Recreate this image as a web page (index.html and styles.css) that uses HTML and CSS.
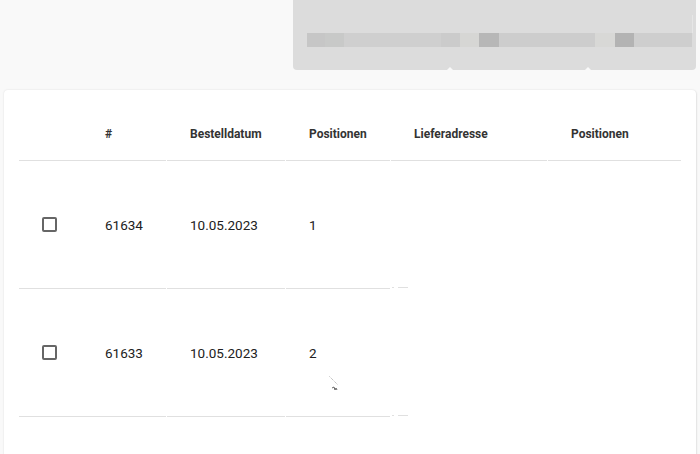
FILE: index.html
```html
<!DOCTYPE html>
<html lang="de">
<head>
<meta charset="utf-8">
<title>Bestellungen</title>
<link rel="stylesheet" href="styles.css">
</head>
<body>
<div class="top">
  <div class="panel">
    <div class="bar">
      <span class="b b1"></span><span class="b b2"></span><span class="b b3"></span><span class="b b4"></span><span class="b b5"></span><span class="b b6"></span><span class="b b7"></span><span class="b b8"></span><span class="b b9"></span><span class="b b10"></span>
    </div>
    <span class="vline"></span>
    <span class="notch n1"></span>
    <span class="notch n2"></span>
  </div>
</div>
<div class="card">
  <div class="grid">
    <div class="th cb-col"></div>
    <div class="th">#</div>
    <div class="th">Bestelldatum</div>
    <div class="th">Positionen</div>
    <div class="th">Lieferadresse</div>
    <div class="th">Positionen</div>

    <div class="td cb-col"><span class="checkbox"></span></div>
    <div class="td">61634</div>
    <div class="td">10.05.2023</div>
    <div class="td">1</div>
    <div class="td addr"><span class="seg s1"></span><span class="seg s2"></span></div>
    <div class="td empty"></div>

    <div class="td cb-col"><span class="checkbox"></span></div>
    <div class="td">61633</div>
    <div class="td">10.05.2023</div>
    <div class="td">2</div>
    <div class="td addr"><span class="seg s1"></span><span class="seg s2"></span></div>
    <div class="td empty"></div>

    <div class="td cb-col"></div>
    <div class="td"></div>
    <div class="td"></div>
    <div class="td"></div>
    <div class="td empty"></div>
    <div class="td empty"></div>
  </div>
  <svg class="cursor" width="12" height="16" viewBox="0 0 12 16">
    <line x1="0.5" y1="0.5" x2="9" y2="9" stroke="#aaa" stroke-width="1" stroke-dasharray="1 1"/>
    <path d="M3 12 L5 11 L6 14 L7 12 L8 14" fill="none" stroke="#666" stroke-width="1"/>
  </svg>
</div>
</body>
</html>
```
FILE: styles.css
```css
html, body {
  margin: 0;
  padding: 0;
  background: #f9f9f9;
  font-family: Roboto, "Liberation Sans", Arial, sans-serif;
  overflow: hidden;
  height: 454px;
}
.top {
  display: flex;
  justify-content: flex-end;
  padding-right: 4px;
  height: 90px;
}
.panel {
  position: relative;
  width: 403px;
  height: 70px;
  background: #dcdcdc;
  border-radius: 0 0 4px 4px;
  display: flex;
  align-items: flex-start;
}
.bar {
  display: flex;
  margin: 33px 0 0 14px;
  height: 14px;
}
.b { display: block; height: 14px; }
.b1 { width: 18px; background: #c6c6c6; }
.b2 { width: 19px; background: #c8c9c8; }
.b3 { width: 97px; background: #cfcfcf; }
.b4 { width: 19px; background: #cbcbcb; }
.b5 { width: 19px; background: #d6d6d4; }
.b6 { width: 20px; background: #b7b7b7; }
.b7 { width: 96px; background: #cdcdcd; }
.b8 { width: 20px; background: #d8d8d6; }
.b9 { width: 19px; background: #b3b3b3; }
.b10 { width: 58px; background: #cecece; }
.vline {
  position: absolute;
  left: 399px;
  top: 15px;
  width: 1px;
  height: 18px;
  background: #e6e6e6;
}
.notch {
  position: absolute;
  bottom: 0;
  width: 0;
  height: 0;
  border-left: 3px solid transparent;
  border-right: 3px solid transparent;
  border-bottom: 3px solid #f9f9f9;
}
.n1 { left: 154px; }
.n2 { left: 292px; }

.card {
  position: relative;
  margin: 0 4px;
  background: #fff;
  border-radius: 4px;
  box-shadow: 0 0 2px rgba(0,0,0,0.12), 1px 1px 2px rgba(0,0,0,0.06);
  padding: 0 15px;
  height: 400px;
}
.grid {
  display: grid;
  grid-template-columns: 62px 84px 118px 104px 156px 133px;
  column-gap: 1px;
}
.th {
  border-bottom: 1px solid #e0e0e0;
  padding-left: 23px;
  font-size: 12px;
  font-weight: 700;
  color: #333;
  line-height: 16px;
  display: flex;
  align-items: center;
  padding-top: 17px;
  height: 53px;
}
.cb-col { margin-right: -1px; }
.td {
  height: 127px;
  border-bottom: 1px solid #e0e0e0;
  padding-left: 23px;
  font-size: 13.5px;
  color: #212121;
  display: flex;
  align-items: center;
}
.td.empty { border-bottom: none; }
.td.addr {
  border-bottom: none;
  padding-left: 0;
  align-items: flex-end;
}
.seg {
  display: block;
  height: 1px;
  background: #e0e0e0;
}
.s1 { width: 2px; margin-left: 1px; }
.s2 { width: 10px; margin-left: 4px; }
.checkbox {
  display: block;
  width: 11px;
  height: 11px;
  border: 2px solid #666;
  border-radius: 2px;
}
.cursor {
  position: absolute;
  left: 325px;
  top: 286px;
}
```
